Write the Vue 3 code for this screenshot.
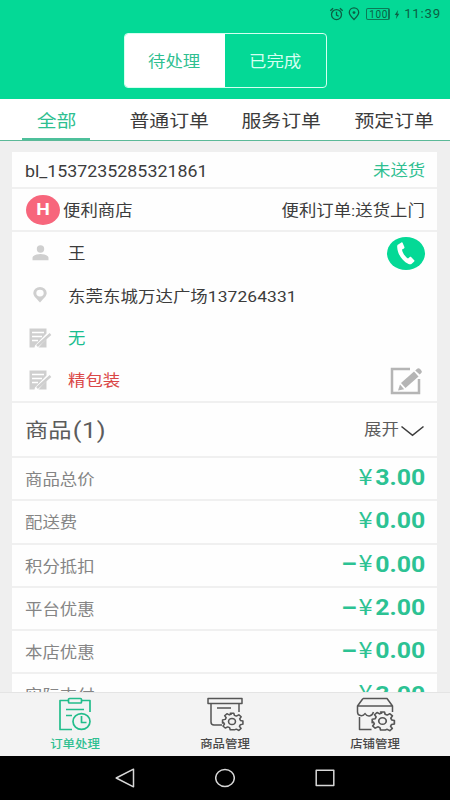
<script setup>
const tabs = ['全部', '普通订单', '服务订单', '预定订单']
const fees = [
  { label: '商品总价', sign: '', value: '3.00' },
  { label: '配送费', sign: '', value: '0.00' },
  { label: '积分抵扣', sign: '–', value: '0.00' },
  { label: '平台优惠', sign: '–', value: '2.00' },
  { label: '本店优惠', sign: '–', value: '0.00' },
  { label: '实际支付', sign: '', value: '3.00' },
]
const gear = 'M-1.700-9h3.400l.6 2.300 1.800.8 2.400-1.400 2.200 2.200-1.400 2.200.8 1.800 2.300.6v3.400l-2.500.6-.8 1.800 1.500 2.200-2.200 2.200-2.300-1.400-1.800.8L1.700 9h-3.400l-.6-2.400-1.800-.8-2.300 1.400-2.200-2.200 1.400-2.200-.8-1.800L-9 1.700v-3.400l2.600-.6.8-1.800-1.400-2.200 2.200-2.200 2.300 1.400 1.800-.8Z'
</script>

<template>
  <div class="screen">
    <header class="header">
      <div class="status">
        <svg class="alarm" viewBox="0 0 14 14"><circle cx="7" cy="7.600" r="5" /><path d="M.8 3.800 3.600 1.200M13.200 3.800 10.400 1.200M7 4.800V8l2.200 1.200" /></svg>
        <svg class="loc" viewBox="0 0 12 14"><path d="M6 12.600C3 9.800 1.300 7.700 1.300 5.600a4.700 4.700 0 0 1 9.400 0C10.700 7.700 9 9.800 6 12.600Z" /><circle class="dot" cx="6" cy="5.600" r="1.400" /></svg>
        <span class="battery">100</span>
        <svg class="bolt" viewBox="0 0 6 10"><path d="M4.200 0 0.500 5.500H2.600L1.800 10 5.500 4.300H3.400Z" /></svg>
        <span class="clock">11:39</span>
      </div>
      <div class="segment">
        <div class="seg on"><span class="t mid">待处理</span></div>
        <div class="seg"><span class="t mid">已完成</span></div>
      </div>
    </header>

    <nav class="tabs">
      <div v-for="(tab, i) in tabs" :key="tab" class="tab" :class="{ active: i === 0 }">
        <span class="t mid">{{ tab }}</span>
      </div>
    </nav>

    <main class="content">
      <section class="card">
        <div class="row order">
          <span class="t left number">bl_1537235285321861</span>
          <span class="t right green">未送货</span>
        </div>
        <div class="row shop">
          <span class="badge"><span class="t mid">H</span></span>
          <span class="t left">便利商店</span>
          <span class="t right push">便利订单:送货上门</span>
        </div>
        <div class="details">
          <div class="detail">
            <span class="icon">
              <svg width="17" height="16" viewBox="0 0 17 16"><circle cx="8.500" cy="4" r="3.700" /><path d="M0.500 15.300V13c0-2.500 4-4 8-4s8 1.500 8 4v2.300Z" /></svg>
            </span>
            <span class="t left">王</span>
            <span class="phone">
              <svg width="18" height="23" viewBox="0 0 18 23"><path d="M1.200 2.600 4.400.5c.6-.3 1-.2 1.300.4l1.700 4.200c.2.600 0 1-.4 1.300L5 7.600c.4 3.300 3.200 7.200 6 9l1.800-1.700c.5-.3.9-.3 1.300.1l3.100 3.200c.5.500.4.900 0 1.300l-2.500 2.300c-.8.700-2 .6-3.200.1C5.200 19.100.6 12.200.2 5.300.1 4 .3 3.100 1.200 2.600Z" /></svg>
            </span>
          </div>
          <div class="detail">
            <span class="icon">
              <svg width="14" height="16" viewBox="0 0 14 16"><path fill-rule="evenodd" d="M7 15.500C3 11 .3 8.800.3 5.900a6.700 5.800 0 0 1 13.400 0C13.700 8.800 11 11 7 15.500ZM7 2.700a3.700 3.400 0 1 0 0 6.800 3.700 3.400 0 1 0 0-6.800Z" /></svg>
            </span>
            <span class="t left address">东莞东城万达广场137264331</span>
          </div>
          <div v-for="note in ['无', '精包装']" :key="note" class="detail" :class="note === '无' ? 'remark' : 'pack'">
            <span class="icon">
              <svg class="note" width="23" height="20" viewBox="0 0 23 20"><path d="M.5.500h17v5L6 17.500l-.5 2h-5Z" /><path d="M13 15.500 17.500 11v8.500h-8Z" /><path class="cut" d="M3 4.500h12M3 8.500h10M3 12.500h6" /><path class="pen" d="M8 18 21.500 6" /></svg>
            </span>
            <span class="t left">{{ note }}</span>
            <svg v-if="note === '精包装'" class="edit" width="33" height="29" viewBox="0 0 33 29"><path class="frame" d="M20 3H2v24h27V13" /><path d="m11 17 13-11.500 4.500 5L15.500 22Z" /><path d="m25.200 4.400 1.700-1.500c1.100-1 2.200-.9 3.200.2l1.200 1.400c.8 1 .7 1.800-.1 2.500l-1.500 1.500Z" /><path d="m10 18.500 4.200 4.700L8 24.500Z" /></svg>
          </div>
        </div>
        <div class="row goods">
          <span class="t left title">商品<span class="count">(1)</span></span>
          <span class="expand"><span class="t right">展开</span>
            <svg width="25" height="12" viewBox="0 0 25 12"><path d="M1.500 1.500 12.500 10.300 23.500 1.500" /></svg>
          </span>
        </div>
        <div v-for="fee in fees" :key="fee.label" class="row fee">
          <span class="t left">{{ fee.label }}</span>
          <span class="price">
            <span class="t right sign">{{ fee.sign }}</span>
            <span class="t right yen">¥</span>
            <span class="t right value">{{ fee.value }}</span>
          </span>
        </div>
      </section>
    </main>

    <footer class="bottom">
      <div class="item current">
        <svg width="34" height="34" viewBox="0 0 34 34"><path d="M10 3.500H2v29h12M24 3.500h8V15" /><rect x="10.500" y="1.500" width="13" height="4.500" rx="1" /><path d="M8 12.500h18M8 18.500h6" /><ellipse cx="23.500" cy="24.500" rx="8.500" ry="7.800" /><path d="M23.500 19v6.500h5" /></svg>
        <span class="t mid">订单处理</span>
      </div>
      <div class="item">
        <svg width="36" height="34" viewBox="0 0 36 34"><rect x="1" y="1.500" width="34" height="5" /><path d="M4 6.500V25q0 3 3 3h8M32 6.500V15M10 11h14" /><g class="gear" transform="translate(25 24.500) scale(1.050 .92)"><path :d="gear" /><circle r="3.300" /></g></svg>
        <span class="t mid">商品管理</span>
      </div>
      <div class="item">
        <svg width="38" height="34" viewBox="0 0 38 34"><path d="M7 1.500h24L36.500 9v6M7 1.500 1.500 9v6c0 4 5.500 5 7.500 1.500C11 20 16 20 17.500 15M1.500 9h35M3.500 20v12.500h12" /><g class="gear" transform="translate(26.500 24) scale(1.140 1)"><path :d="gear" /><circle r="3.300" /></g></svg>
        <span class="t mid">店铺管理</span>
      </div>
    </footer>

    <div class="system">
      <svg width="20" height="20" viewBox="0 0 20 20"><path d="M1.200 10 18.500 1.200v17.600Z" /></svg>
      <svg width="20" height="20" viewBox="0 0 20 20"><ellipse cx="10" cy="10" rx="9.300" ry="8.500" /></svg>
      <svg width="20" height="20" viewBox="0 0 20 20"><rect x="1.200" y="2.200" width="17.600" height="15.400" /></svg>
    </div>
  </div>
</template>

<style>
body { background: #efefef; overflow: hidden; }
</style>

<style scoped>
.screen {
  width: 450px;
  height: 800px;
  display: flex;
  flex-direction: column;
  overflow: hidden;
  background: #efefef;
  color: #3c3c3c;
  font-family: Roboto, "Noto Sans CJK SC", sans-serif;
  font-size: 15.400px;
  line-height: 1;
  box-sizing: border-box;
}
svg { display: block; flex: none; }
.t { display: inline-block; white-space: nowrap; transform: scaleX(1.130); }
.left { transform-origin: left center; }
.right { transform-origin: right center; }
.mid { transform-origin: center; }
.green { color: #2fbf91; }

.header {
  flex: none;
  height: 99px;
  background: #04d996;
  display: flex;
  flex-direction: column;
  align-items: center;
}
.status {
  align-self: stretch;
  height: 28px;
  margin-bottom: 5px;
  padding-right: 9px;
  display: flex;
  align-items: center;
  justify-content: flex-end;
  color: #0c5f44;
}
.status svg { fill: none; stroke: #0c5f44; stroke-width: 1.300; }
.status .dot, .status .bolt { fill: #0c5f44; stroke: none; }
.alarm { width: 15px; height: 14px; margin-right: 4px; }
.loc { width: 12px; height: 14px; margin-right: 6px; }
.battery {
  font-size: 10px;
  line-height: 9px;
  letter-spacing: 0.700px;
  padding: 1px 0 0 2px;
  border: 1px solid #0c7a56;
  border-right-width: 2px;
  border-radius: 2px;
  margin-right: 4px;
}
.bolt { width: 6px; height: 9px; margin-right: 4px; }
.clock { font-size: 13.200px; letter-spacing: 0.800px; }
.segment {
  width: 203px;
  height: 55px;
  display: flex;
  box-sizing: border-box;
  border: 1px solid #d5fff0;
  border-radius: 4px;
  overflow: hidden;
}
.seg {
  width: 50%;
  box-sizing: border-box;
  display: flex;
  align-items: center;
  justify-content: center;
  padding-top: 4px;
  padding-right: 1px;
  color: #d5fff0;
}
.seg.on { background: #fff; color: #2fbf91; padding-right: 2px; }

.tabs {
  flex: none;
  height: 42px;
  box-sizing: border-box;
  display: grid;
  grid-template-columns: repeat(4, 112.500px);
  background: #fff;
  border-bottom: 1px solid #5cb998;
  font-size: 17.600px;
}
.tab { display: flex; align-items: center; justify-content: center; padding-top: 4px; }
.tab.active { color: #2fbf91; }
.tab.active::after {
  content: "";
  width: 68px;
  height: 2px;
  margin-left: -68px;
  align-self: flex-end;
  background: #4ec09b;
  transform: translateX(16px);
}

.content { flex: 1; min-height: 0; overflow: hidden; padding: 11px 13px 0 12px; }
.card { background: #fefefe; }
.row {
  display: flex;
  align-items: center;
  justify-content: space-between;
  box-sizing: border-box;
  padding: 3px 12px 0 13px;
  border-bottom: 2px solid #f0f0f0;
}
.order { height: 37px; padding-top: 4px; }
.number { font-size: 15.750px; }
.shop { height: 43px; padding-top: 0; justify-content: flex-start; }
.shop > .t { padding-top: 4px; }
.push { margin-left: auto; }
.badge {
  width: 34px;
  height: 30px;
  margin: 0 3px 0 1px;
  border-radius: 50%;
  background: #f7667c;
  color: #fff;
  font-size: 17px;
  font-weight: 700;
  display: flex;
  align-items: center;
  justify-content: center;
}
.details {
  height: 171px;
  box-sizing: border-box;
  padding: 0 12px 0 13px;
  border-bottom: 2px solid #f0f0f0;
}
.detail { display: flex; align-items: center; height: 42.300px; }
.detail > .t { padding-top: 4px; }
.address { letter-spacing: 0.080px; }
.icon { width: 30px; margin-right: 12.500px; display: flex; justify-content: center; }
.icon svg { fill: #cfcfcf; }
.note .cut { fill: none; stroke: #fff; stroke-width: 1.300; }
.note .pen { fill: none; stroke: #cfcfcf; stroke-width: 2.500; }
.phone {
  width: 38px;
  height: 33px;
  margin-left: auto;
  border-radius: 50%;
  background: #04d996;
  display: flex;
  align-items: center;
  justify-content: center;
}
.phone svg { fill: #fff; }
.remark { color: #18bd8f; }
.pack { color: #da4747; }
.edit { margin-left: auto; margin-right: 2px; fill: #b5b5b5; }
.edit .frame { fill: none; stroke: #b5b5b5; stroke-width: 2.500; }
.goods { height: 55px; padding-top: 2px; color: #5c5c5c; }
.title { font-size: 20.600px; }
.count { font-size: 22.500px; letter-spacing: 0.500px; margin-left: 1px; }
.expand { display: flex; align-items: center; gap: 1px; }
.expand svg { fill: none; stroke: #3c3c3c; stroke-width: 1.600; }
.fee { height: 43.300px; padding-top: 4px; color: #858585; }
.price {
  display: flex;
  align-items: center;
  height: 22px;
  font-size: 22px;
  font-weight: 700;
  color: #2cc293;
  padding-bottom: 5px;
}
.value { margin-left: 8.500px; }
.yen { font-family: "Noto Sans CJK SC", sans-serif; font-size: 22.500px; font-weight: 400; padding-bottom: 6px; }
.sign { margin-right: 2.500px; font-weight: 700; padding-top: 1px; }

.bottom {
  flex: none;
  height: 64px;
  box-sizing: border-box;
  border-top: 1px solid #e4e4e4;
  background: #f3f3f3;
  display: grid;
  grid-template-columns: repeat(3, 1fr);
  font-size: 11px;
  font-weight: 500;
  color: #484848;
}
.item { display: flex; flex-direction: column; align-items: center; padding-top: 4px; gap: 8px; }
.item svg { fill: none; stroke: #555; stroke-width: 1.500; stroke-linejoin: round; overflow: visible; }
.item.current { color: #2fbf91; }
.item.current svg { stroke: #23bd8b; stroke-width: 1.700; }
.gear { fill: #f3f3f3; }

.system {
  flex: none;
  height: 44px;
  background: #000;
  display: flex;
  align-items: center;
  justify-content: center;
  gap: 80px;
}
.system svg { fill: none; stroke: #d8d8d8; stroke-width: 1.500; stroke-linejoin: round; }
</style>
